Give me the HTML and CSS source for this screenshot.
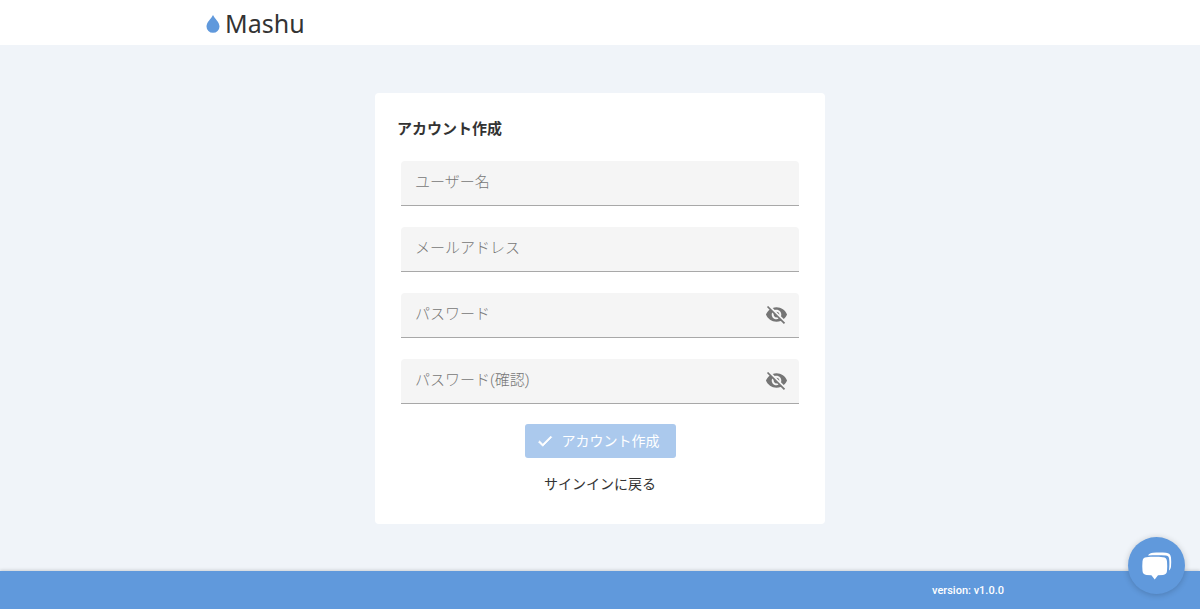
FILE: index.html
```html
<!DOCTYPE html>
<html lang="ja">
<head>
    <meta charset="UTF-8">
    <meta name="viewport" content="width=device-width, initial-scale=1.0">
    <title>Mashu</title>
    <link rel="stylesheet" href="styles.css">
</head>
<body>
    <header class="header">
        <div class="container">
            <a class="logo" href="#">
                <svg class="logo-drop" viewBox="0 0 14 18" aria-hidden="true">
                    <path d="M7 0C5.400 3.400.5 7.200.5 11.500a6.500 6.300 0 0 0 13 0C13.500 7.200 8.600 3.400 7 0z"/>
                </svg>
                <span>Mashu</span>
            </a>
        </div>
    </header>

    <main class="main">
        <form class="card" id="signupForm">
            <h1>アカウント作成</h1>

            <div class="field">
                <input type="text" id="username" placeholder=" " autocomplete="username" required>
                <label for="username">ユーザー名</label>
            </div>
            <div class="field">
                <input type="email" id="email" placeholder=" " autocomplete="email" required>
                <label for="email">メールアドレス</label>
            </div>
            <div class="field">
                <input type="password" id="password" placeholder=" " autocomplete="new-password" required>
                <label for="password">パスワード</label>
                <button type="button" class="toggle" aria-label="パスワードを表示">
                    <svg viewBox="0 0 24 24"><path d="M12 7c2.760 0 5 2.240 5 5 0 .65-.13 1.260-.36 1.830l2.920 2.920c1.510-1.260 2.700-2.890 3.430-4.750-1.730-4.390-6-7.500-11-7.500-1.400 0-2.740.25-3.980.7l2.160 2.160C10.740 7.130 11.350 7 12 7zM2 4.270l2.280 2.280.46.46C3.080 8.300 1.780 10.020 1 12c1.730 4.390 6 7.500 11 7.500 1.550 0 3.030-.3 4.380-.84l.42.42L19.730 22 21 20.730 3.270 3 2 4.270zM7.530 9.800l1.550 1.550c-.05.21-.08.43-.08.65 0 1.660 1.340 3 3 3 .22 0 .44-.03.65-.08l1.550 1.550c-.67.33-1.410.53-2.200.53-2.760 0-5-2.240-5-5 0-.79.2-1.530.53-2.200zm4.310-.78l3.150 3.150.02-.16c0-1.660-1.340-3-3-3l-.17.01z"/></svg>
                </button>
            </div>
            <div class="field">
                <input type="password" id="passwordConfirm" placeholder=" " autocomplete="new-password" required>
                <label for="passwordConfirm">パスワード(確認)</label>
                <button type="button" class="toggle" aria-label="パスワード(確認)を表示">
                    <svg viewBox="0 0 24 24"><path d="M12 7c2.760 0 5 2.240 5 5 0 .65-.13 1.260-.36 1.830l2.920 2.920c1.510-1.260 2.700-2.890 3.430-4.750-1.730-4.390-6-7.500-11-7.500-1.400 0-2.740.25-3.980.7l2.160 2.160C10.740 7.130 11.350 7 12 7zM2 4.270l2.280 2.280.46.46C3.080 8.300 1.780 10.020 1 12c1.730 4.390 6 7.500 11 7.500 1.550 0 3.030-.3 4.380-.84l.42.42L19.730 22 21 20.730 3.270 3 2 4.270zM7.530 9.800l1.550 1.550c-.05.21-.08.43-.08.65 0 1.660 1.340 3 3 3 .22 0 .44-.03.65-.08l1.550 1.550c-.67.33-1.410.53-2.200.53-2.760 0-5-2.240-5-5 0-.79.2-1.530.53-2.200zm4.310-.78l3.150 3.150.02-.16c0-1.660-1.340-3-3-3l-.17.01z"/></svg>
                </button>
            </div>

            <div class="actions">
                <button type="submit" class="submit" disabled>
                    <svg viewBox="0 0 24 24" aria-hidden="true"><path d="M9 16.170L4.830 12l-1.420 1.410L9 19 21 7l-1.410-1.410z"/></svg>
                    <span>アカウント作成</span>
                </button>
                <a class="back" href="#">サインインに戻る</a>
            </div>
        </form>
    </main>

    <footer class="footer">
        <div class="container">
            <span class="version">version: v1.0.0</span>
        </div>
    </footer>

    <button type="button" class="chat" aria-label="チャット">
        <svg viewBox="0 0 30 28">
            <path d="M6 3.500C7 1.500 9 1 11 .8c4-.4 9-.4 13 0 3 .3 4.600 1.700 5 4.700.3 3 .3 6 0 9-.2 1.700-.8 3-2 4 .5-4 .6-8 .1-12-.3-2-1.400-2.900-3.400-3C18 3 12 3 6 3.500z"/>
            <path d="M4.500 5.300c5.500-.6 11-.6 16.500 0 2.500.2 3.700 1.400 4 3.900.3 3.300.3 6.600 0 9.900-.3 2.500-1.500 3.700-4 3.900l-5 .3-3.300 4.200-3.300-4.200-4.900-.3c-2.500-.2-3.700-1.400-4-3.900-.3-3.300-.3-6.600 0-9.900.3-2.500 1.500-3.700 4-3.900z"/>
        </svg>
    </button>

    <script>
        const signupForm = document.getElementById('signupForm');
        const submitButton = signupForm.querySelector('.submit');

        // Enable the submit button once every field is valid
        signupForm.addEventListener('input', () => {
            const same = signupForm.password.value === signupForm.passwordConfirm.value;
            submitButton.disabled = !(signupForm.checkValidity() && same);
        });

        // Show or hide the password
        signupForm.querySelectorAll('.toggle').forEach(button => {
            button.addEventListener('click', () => {
                const input = button.parentElement.querySelector('input');
                input.type = input.type === 'password' ? 'text' : 'password';
            });
        });
    </script>
</body>
</html>
```
FILE: styles.css
```css
* {
    box-sizing: border-box;
}
body {
    display: flex;
    flex-direction: column;
    min-height: 100vh;
    margin: 0;
    background-color: #f0f4f9;
    color: #333;
    font-family: Roboto, "Noto Sans CJK JP", sans-serif;
}
button,
input {
    font-family: inherit;
}
.container {
    display: flex;
    width: 100%;
    max-width: 800px;
    margin: 0 auto;
    padding: 0 6px;
}
.header {
    display: flex;
    height: 45px;
    background-color: white;
}
.logo {
    display: flex;
    align-items: center;
    gap: 5px;
    color: #333;
    font-family: "Noto Sans", sans-serif;
    font-size: 25px;
    font-weight: 400;
    text-decoration: none;
}
.logo-drop {
    width: 14px;
    height: 18px;
    margin-top: 3px;
    fill: #6099dc;
}
.main {
    display: flex;
    flex: 1;
    justify-content: center;
    align-items: flex-start;
    padding: 48px 16px 46px;
}
.card {
    width: 100%;
    max-width: 450px;
    padding: 24px 26px 28px;
    background-color: white;
    border-radius: 4px;
}
h1 {
    margin: 0 -4px 20px;
    font-size: 15px;
    font-weight: 700;
    line-height: 24px;
}
.field {
    position: relative;
    margin-bottom: 21px;
}
.field:nth-of-type(4) {
    margin-bottom: 20px;
}
.field input {
    display: block;
    width: 100%;
    height: 45px;
    padding: 0 48px 0 14px;
    border: none;
    border-bottom: 1px solid #a8a8a8;
    border-radius: 4px 4px 0 0;
    background-color: #f5f5f5;
    font-size: 16px;
}
.field label {
    position: absolute;
    top: 9px;
    left: 14px;
    color: #777;
    font-size: 15px;
    font-weight: 300;
    line-height: 24px;
    pointer-events: none;
}
.field input:not(:placeholder-shown) + label {
    display: none;
}
.toggle {
    position: absolute;
    top: 10px;
    right: 11px;
    width: 23px;
    height: 23px;
    padding: 0;
    border: none;
    background: none;
    cursor: pointer;
}
.toggle svg {
    display: block;
    fill: #757575;
}
.actions {
    display: flex;
    flex-direction: column;
    align-items: center;
    gap: 14px;
}
.submit {
    display: flex;
    align-items: center;
    gap: 8px;
    height: 34px;
    padding: 0 16px 0 11px;
    border: none;
    border-radius: 3px;
    background-color: #6099dc;
    color: white;
    font-size: 14px;
    line-height: 20px;
    cursor: pointer;
}
.submit:disabled {
    background-color: #abc9ed;
    cursor: default;
}
.submit svg {
    width: 18px;
    fill: white;
    stroke: white;
}
.back {
    color: #333;
    font-size: 14px;
    line-height: 24px;
    text-decoration: none;
}
.footer {
    display: flex;
    flex-shrink: 0;
    height: 38px;
    background-color: #6099dc;
    box-shadow: 0 -1px 3px rgba(0,0,0,0.15);
}
.footer .container {
    justify-content: flex-end;
    align-items: center;
    padding: 0;
}
.version {
    margin-right: -4px;
    color: white;
    font-size: 11px;
    font-weight: 500;
}
.chat {
    position: fixed;
    right: 15px;
    bottom: 15px;
    display: flex;
    justify-content: center;
    align-items: center;
    width: 57px;
    height: 57px;
    padding: 0;
    border: none;
    border-radius: 50%;
    background-color: #6099dc;
    box-shadow: 0 1px 6px rgba(0,0,0,0.2);
    cursor: pointer;
}
.chat svg {
    width: 30px;
    height: 28px;
    fill: white;
}
```
